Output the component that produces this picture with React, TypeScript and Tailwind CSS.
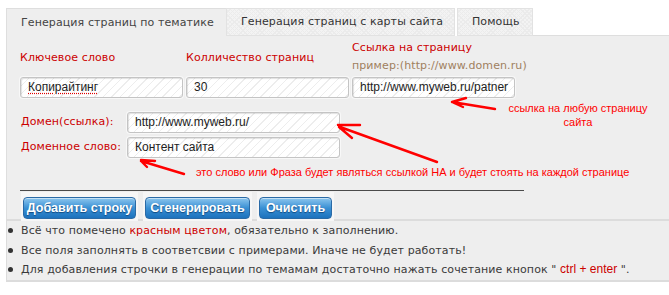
import React from "react";

const pixel = "font-['DejaVu_Sans',sans-serif]";
const arial = "font-['Liberation_Sans',Arial,sans-serif]";

const field =
  "h-[21px] rounded-[3px] border border-[#c4c4c4] bg-white bg-[image:repeating-linear-gradient(135deg,#ffffff_0_5px,#ededed_5px_6px)] shadow-[0_0_0_1px_#f8f8f8,inset_1px_1px_1px_rgba(0,0,0,0.12)] px-[7px] text-[12px] leading-[19px] text-[#222] overflow-hidden whitespace-nowrap";

function Field({ value, className = "", spell = false }: { value: string; className?: string; spell?: boolean }) {
  return (
    <div className={`${field} ${arial} ${className}`}>
      {spell ? (
        <span className="underline decoration-dotted decoration-[#e00000] underline-offset-2">{value}</span>
      ) : (
        value
      )}
    </div>
  );
}

function Btn({ label, w }: { label: string; w: string }) {
  return (
    <div className="p-[2px] bg-[#f6f6f6]">
      <button
        className={`${w} ${arial} h-[22px] rounded-[4px] border border-[#2a6aa6] bg-[linear-gradient(#8cc6ee,#3a90d4_50%,#1c72bd)] text-[12.5px] font-bold text-white [text-shadow:0_1px_1px_#124a80] shadow-[inset_0_1px_0_rgba(255,255,255,0.5)]`}
      >
        {label}
      </button>
    </div>
  );
}

export default function App() {
  return (
    <div className="relative w-[669px] h-[295px] overflow-hidden bg-white text-[#444]">
      <div className="pt-2 pl-[6px]">
        {/* ТАБЫ */}
        <div className={`flex h-[28px] ${pixel} text-[11px] tracking-[0.1px] whitespace-nowrap`}>
          <div className="w-[220px] border-l border-t border-[#dedede] bg-[#eeeeee] pl-[14px] leading-[27px] text-[#444]">
            Генерация страниц по тематике
          </div>
          <div className="w-[229px] border border-[#e2e2e2] bg-[#f3f3f3] bg-[image:repeating-linear-gradient(45deg,transparent_0_2px,#ebebeb_2px_3px),repeating-linear-gradient(135deg,transparent_0_2px,#ebebeb_2px_3px)] pl-[14px] leading-[26px] text-[#333]">
            Генерация страниц с карты сайта
          </div>
          <div className="ml-[2px] w-[76px] border border-[#e2e2e2] bg-[#f3f3f3] bg-[image:repeating-linear-gradient(45deg,transparent_0_2px,#ebebeb_2px_3px),repeating-linear-gradient(135deg,transparent_0_2px,#ebebeb_2px_3px)] pl-[14px] leading-[26px] text-[#333]">
            Помощь
          </div>
          <div className="flex-1 border-b border-[#dedede]" />
        </div>

        {/* ФОРМА */}
        <div className="h-[183px] border-l border-[#dedede] bg-[#eeeeee] pl-[13px] pt-[3px]">
          <div className={`grid grid-cols-[163px_163px_163px] gap-x-[3px] items-end ${pixel} text-[11px] tracking-[0.1px] leading-[18px] whitespace-nowrap`}>
            <div className="flex flex-col">
              <span className="text-[#cc0000]">Ключевое слово</span>
              <Field value="Копирайтинг" spell className="mt-[10px] tracking-normal" />
            </div>
            <div className="flex flex-col">
              <span className="text-[#cc0000]">Колличество страниц</span>
              <Field value="30" className="mt-[10px] tracking-normal" />
            </div>
            <div className="flex flex-col">
              <span className="text-[#cc0000]">Ссылка на страницу</span>
              <span className="text-[#a0805e]">пример:(http://www.domen.ru)</span>
              <Field value="http://www.myweb.ru/patner" className="mt-[2px] tracking-normal" />
            </div>
          </div>

          <div className={`mt-[14px] flex flex-col gap-[4px] ${pixel} text-[11px] tracking-[0.1px] whitespace-nowrap`}>
            <div className="flex items-center">
              <span className="w-[107px] pl-[1px] text-[#cc0000]">Домен(ссылка):</span>
              <Field value="http://www.myweb.ru/" className="w-[213px] tracking-normal" />
            </div>
            <div className="flex items-center">
              <span className="w-[107px] pl-[1px] text-[#cc0000]">Доменное слово:</span>
              <Field value="Контент сайта" className="w-[213px] tracking-normal" />
            </div>
          </div>

          <div className={`ml-[176px] mt-[6px] h-[16px] ${arial} text-[11px] leading-[16px] text-[#ff0000] whitespace-nowrap`}>
            это слово или Фраза будет являться ссылкой НА и будет стоять на каждой странице
          </div>

          <div className="mt-[10px] h-px w-[504px] bg-[#4a4a4a]" />

          <div className="mt-px flex gap-[5px] pl-[1px]">
            <Btn label="Добавить строку" w="w-[113px]" />
            <Btn label="Сгенерировать" w="w-[105px]" />
            <Btn label="Очистить" w="w-[73px]" />
          </div>
        </div>

        {/* ПОДСКАЗКИ */}
        <ul className={`border-l border-t-2 border-b-2 border-[#dcdcdc] bg-[#eeeeee] ${pixel} text-[11px] tracking-[0.1px] leading-[19.5px] text-[#3a3a3a] whitespace-nowrap`}>
          <li className="flex items-center">
            <span className="ml-px mr-[8px] h-[5px] w-[5px] rounded-full bg-[#333]" />
            <span>
              Всё что помечено <span className="text-[#cc0000]">красным цветом</span>, обязательно к заполнению.
            </span>
          </li>
          <li className="flex items-center">
            <span className="ml-px mr-[8px] h-[5px] w-[5px] rounded-full bg-[#333]" />
            <span>Все поля заполнять в соответсвии с примерами. Иначе не будет работать!</span>
          </li>
          <li className="flex items-center">
            <span className="ml-px mr-[8px] h-[5px] w-[5px] rounded-full bg-[#333]" />
            <span>
              Для добавления строчки в генерации по темамам достаточно нажать сочетание кнопок "{" "}
              <span className={`${arial} text-[12px] tracking-normal text-[#cc0000]`}>ctrl + enter</span> ".
            </span>
          </li>
        </ul>
      </div>

      {/* подпись справа */}
      <div className={`absolute left-[506px] top-[101px] w-[144px] text-center ${arial} text-[11px] leading-[14px] text-[#ff0000]`}>
        ссылка на любую страницу
        <br />
        сайта
      </div>

      {/* стрелки */}
      <svg className="pointer-events-none absolute left-0 top-0" width="669" height="295" viewBox="0 0 669 295">
        <g stroke="#ff0000" strokeWidth="2.4" strokeLinecap="round" fill="none">
          <path d="M495 109 L452 102 M452 102 L466 98 M452 102 L463 107" />
          <path d="M437 162 L340 127 M338 125 L360 125 M339 127 L352 138" />
          <path d="M184 174 L141 161 M141 160 L155 161 M142 162 L147 167" />
        </g>
      </svg>
    </div>
  );
}
